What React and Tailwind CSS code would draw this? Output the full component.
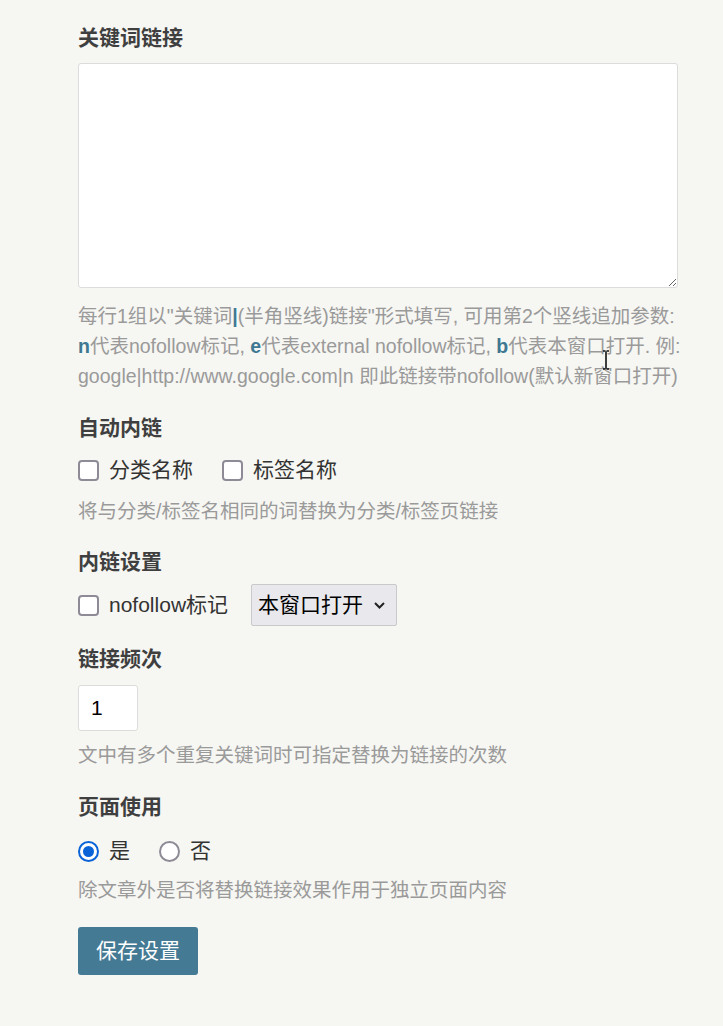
import React from 'react';

function Heading({ children, className = '' }) {
  return <div className={`text-[21px] leading-[30px] font-bold text-[#3f3f3f] ${className}`}>{children}</div>;
}

function Help({ children, className = '' }) {
  return <div className={`text-[19.5px] leading-[30px] text-[#9a9a9a] ${className}`}>{children}</div>;
}

function Checkbox({ label }) {
  return (
    <label className="flex items-center">
      <span className="w-[21px] h-[21px] rounded-[4px] border-[2.5px] border-[#8e8b97] bg-white" />
      <span className="ml-[10px] text-[21px] leading-[30px] text-[#333]">{label}</span>
    </label>
  );
}

function Radio({ label, checked }) {
  return (
    <label className="flex items-center">
      {checked ? (
        <span className="w-[21px] h-[21px] rounded-full border-[2.5px] border-[#0b63d8] bg-white flex items-center justify-center">
          <span className="w-[11px] h-[11px] rounded-full bg-[#0b63d8]" />
        </span>
      ) : (
        <span className="w-[21px] h-[21px] rounded-full border-[2.5px] border-[#8e8b97] bg-white" />
      )}
      <span className="ml-[10px] text-[21px] leading-[30px] text-[#333]">{label}</span>
    </label>
  );
}

export default function App() {
  return (
    <div className="min-h-screen bg-[#f6f6f2] font-['Liberation_Sans','Noto_Sans_CJK_SC',sans-serif]">
      <div className="w-[600px] ml-[78px] pt-[23px] pb-[50px]">
        {/* 关键词链接 */}
        <Heading>关键词链接</Heading>
        <textarea className="block mt-[10px] w-[600px] h-[225px] bg-white border border-[#dcdcdc] rounded-[3px] resize-y outline-none" />
        <Help className="mt-[13px] relative whitespace-nowrap">
          每行1组以"关键词<b className="text-[#3e7893]">|</b>(半角竖线)链接"形式填写, 可用第2个竖线追加参数:
          <br />
          <b className="text-[#3e7893]">n</b>代表nofollow标记, <b className="text-[#3e7893]">e</b>代表external nofollow标记, <b className="text-[#3e7893]">b</b>代表本窗口打开. 例:
          <br />
          google|http://www.google.com|n 即此链接带nofollow(默认新窗口打开)
          {/* mouse text cursor */}
          <svg className="absolute left-[524px] top-[49px]" width="8" height="20" viewBox="0 0 8 20">
            <path d="M1 1h2.5M4.5 1H7M4 1.5v17M1 19h2.5M4.5 19H7" stroke="#111" strokeWidth="1.6" fill="none" />
          </svg>
        </Help>

        {/* 自动内链 */}
        <Heading className="mt-[22px]">自动内链</Heading>
        <div className="mt-[12px] flex items-center gap-[29px]">
          <Checkbox label="分类名称" />
          <Checkbox label="标签名称" />
        </div>
        <Help className="mt-[11px]">将与分类/标签名相同的词替换为分类/标签页链接</Help>

        {/* 内链设置 */}
        <Heading className="mt-[21px]">内链设置</Heading>
        <div className="mt-[7px] flex items-center gap-[23px]">
          <Checkbox label="nofollow标记" />
          <div className="h-[42px] w-[146px] flex items-center justify-between pl-[6px] pr-[11px] bg-[#e9e8ed] border border-[#c9c9c9] rounded-[2px] text-[21px] text-black">
            <span>本窗口打开</span>
            <svg width="11" height="7" viewBox="0 0 11 7">
              <path d="M1 1l4.5 4.5L10 1" stroke="#222" strokeWidth="2" fill="none" />
            </svg>
          </div>
        </div>

        {/* 链接频次 */}
        <Heading className="mt-[18px]">链接频次</Heading>
        <div className="mt-[11px] w-[60px] h-[46px] bg-white border border-[#dcdcdc] rounded-[3px] flex items-center pl-[12px] text-[21px] text-black">
          1
        </div>
        <Help className="mt-[9px]">文中有多个重复关键词时可指定替换为链接的次数</Help>

        {/* 页面使用 */}
        <Heading className="mt-[22px]">页面使用</Heading>
        <div className="mt-[14px] flex items-center gap-[29px]">
          <Radio label="是" checked />
          <Radio label="否" />
        </div>
        <Help className="mt-[9px]">除文章外是否将替换链接效果作用于独立页面内容</Help>

        <button className="mt-[22px] w-[120px] h-[48px] bg-[#457a94] rounded-[3px] text-white text-[21px]">
          保存设置
        </button>
      </div>
    </div>
  );
}
